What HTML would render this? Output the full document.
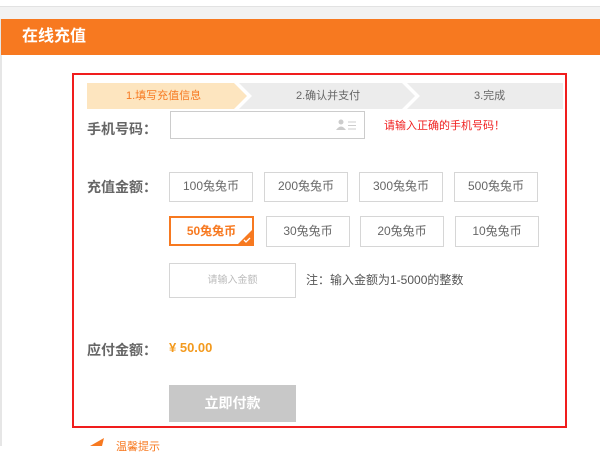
<!DOCTYPE html>
<html><head><meta charset="utf-8"><style>
*{margin:0;padding:0;box-sizing:border-box}
body{width:600px;height:446px;overflow:hidden;background:#fff;font-family:"Liberation Sans","Noto Sans CJK SC",sans-serif;position:relative}
.a{position:absolute}
.btn{position:absolute;border:1px solid #d6d6d6;font-size:12px;color:#666;text-align:center;line-height:27px;background:#fff}
.lbl{position:absolute;font-size:14px;color:#666;font-weight:bold}
</style></head><body>
<div class="a" style="left:0;top:6px;width:600px;height:1px;background:#e2e2e2"></div>
<div class="a" style="left:0;top:7px;width:600px;height:12px;background:#f2f2f2"></div>
<div class="a" style="left:0;top:19px;width:2px;height:427px;background:#e6e6e6"></div>
<div class="a" style="left:1px;top:19px;width:599px;height:36px;background:#f77920"></div>
<div class="a" style="left:22px;top:27px;color:#fff;font-size:16px;font-weight:bold;line-height:20px">在线充值</div>
<div class="a" style="left:72px;top:73px;width:495px;height:355px;border:2px solid #f01d1d"></div>
<svg class="a" style="left:87px;top:83px" width="476" height="26">
<polygon points="0,0 147,0 160,13 147,26 0,26" fill="#fde5bf"/>
<polygon points="152,0 315,0 328,13 315,26 152,26 165,13" fill="#ececec"/>
<polygon points="320,0 476,0 476,26 320,26 333,13" fill="#ececec"/>
</svg>
<div class="a" style="left:126px;top:89px;font-size:11px;color:#f77920;line-height:14px">1.填写充值信息</div>
<div class="a" style="left:296px;top:89px;font-size:11px;color:#666;line-height:14px">2.确认并支付</div>
<div class="a" style="left:474px;top:89px;font-size:11px;color:#666;line-height:14px">3.完成</div>
<div class="lbl" style="left:87px;top:119px">手机号码：</div>
<div class="a" style="left:170px;top:111px;width:195px;height:28px;border:1px solid #ccc"></div>
<svg class="a" style="left:336px;top:119px" width="22" height="12"><circle cx="5" cy="3" r="2.5" fill="#ccc"/><path d="M0 11 Q5 4 10 11Z" fill="#ccc"/><path d="M12 3h8M12 6.5h8M12 10h8" stroke="#ccc" stroke-width="1"/></svg>
<div class="a" style="left:384px;top:119px;font-size:11px;color:#f02020;line-height:14px">请输入正确的手机号码！</div>
<div class="lbl" style="left:87px;top:177px">充值金额：</div>
<div class="btn" style="left:169px;top:172px;width:84px;height:30px">100兔兔币</div>
<div class="btn" style="left:264px;top:172px;width:84px;height:30px">200兔兔币</div>
<div class="btn" style="left:359px;top:172px;width:84px;height:30px">300兔兔币</div>
<div class="btn" style="left:454px;top:172px;width:84px;height:30px">500兔兔币</div>
<div class="btn" style="left:169px;top:216px;width:85px;height:30px;border:2px solid #f77920;color:#f77920;font-weight:bold;line-height:26px;overflow:hidden">50兔兔币<svg style="position:absolute;right:0;bottom:0" width="14" height="14"><polygon points="14,0 14,14 0,14" fill="#f77920"/><path d="M6 10l2 2 4-4" stroke="#fff" stroke-width="1.3" fill="none"/></svg></div>
<div class="btn" style="left:266px;top:216px;width:84px;height:31px;line-height:29px">30兔兔币</div>
<div class="btn" style="left:360px;top:216px;width:84px;height:31px;line-height:29px">20兔兔币</div>
<div class="btn" style="left:455px;top:216px;width:84px;height:31px;line-height:29px">10兔兔币</div>
<div class="btn" style="left:169px;top:263px;width:127px;height:35px;line-height:33px;font-size:10px;color:#bbb">请输入金额</div>
<div class="a" style="left:306px;top:272px;font-size:12px;color:#555;line-height:16px">注：输入金额为1-5000的整数</div>
<div class="lbl" style="left:87px;top:340px">应付金额：</div>
<div class="a" style="left:169px;top:340px;font-size:13px;color:#f39a1e;font-weight:bold;line-height:16px">¥ 50.00</div>
<div class="a" style="left:169px;top:385px;width:127px;height:37px;background:#c8c8c8;color:#fff;font-weight:bold;font-size:14px;text-align:center;line-height:37px">立即付款</div>
<svg class="a" style="left:90px;top:438px" width="16" height="8"><polygon points="0,8 14,0 12,8" fill="#f77920"/></svg>
<div class="a" style="left:116px;top:440px;font-size:11px;color:#f77920;line-height:14px">温馨提示</div>
</body></html>
